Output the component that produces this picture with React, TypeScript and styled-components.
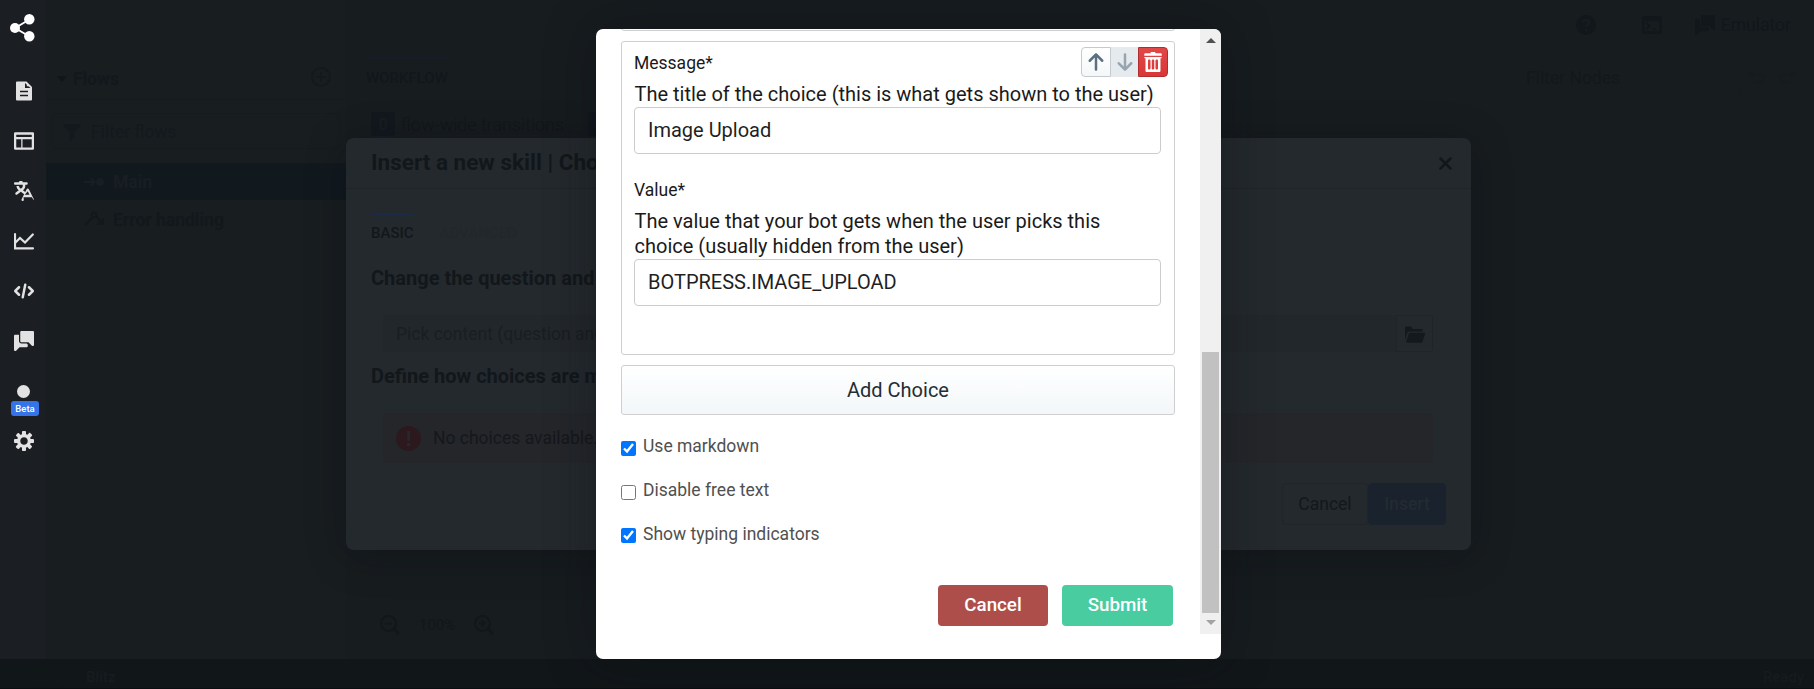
import React from "react";
import styled, { createGlobalStyle, css } from "styled-components";

const GlobalStyle = createGlobalStyle`
  * { box-sizing: border-box; }
  html, body { margin: 0; padding: 0; overflow: hidden; background: #181d20; }
  body { font-family: Roboto, "Liberation Sans", sans-serif; font-size: 17.5px; }
  button, input { font-family: inherit; }
`;

/* ---------- icons ---------- */

const paths = {
  code: "M15.71 7.29l-3-3a1.003 1.003 0 00-1.42 1.42L13.59 8l-2.29 2.29a1.003 1.003 0 001.42 1.42l3-3c.18-.18.29-.43.29-.71 0-.28-.12-.53-.3-.71zM5 5a1.003 1.003 0 00-1.71-.71l-3 3C.11 7.47 0 7.72 0 8c0 .28.11.53.29.71l3 3a1.003 1.003 0 001.42-1.42L2.41 8 4.7 5.71c.19-.18.3-.43.3-.71zm4-3c-.48 0-.87.35-.96.81l-.01-.01-2 10 .01.01c-.02.06-.04.12-.04.19 0 .55.45 1 1 1 .48 0 .87-.35.96-.81l.01.01 2-10-.01-.01c.02-.06.04-.12.04-.19 0-.55-.45-1-1-1z",
  chat: "M6 10c-1.1 0-2-.9-2-2V3H1c-.55 0-1 .45-1 1v11a1.003 1.003 0 001.71.71L4.41 13H10c.55 0 1-.45 1-1v-1.17l-.83-.83H6zm9-10H6c-.55 0-1 .45-1 1v7c0 .55.45 1 1 1h5.59l2.71 2.71c.17.18.42.29.7.29.55 0 1-.45 1-1V1c0-.55-.45-1-1-1z",
  cog: "M15.19 6.39h-1.85c-.11-.37-.27-.71-.45-1.04l1.36-1.36c.31-.31.31-.82 0-1.13l-1.13-1.13c-.31-.31-.82-.31-1.13 0l-1.36 1.36c-.33-.17-.67-.33-1.04-.44V.79c0-.44-.36-.8-.8-.8h-1.6c-.44 0-.8.36-.8.8v1.86c-.39.12-.75.28-1.1.47l-1.3-1.3c-.3-.3-.79-.3-1.09 0L1.82 2.91c-.3.3-.3.79 0 1.09l1.3 1.3c-.2.34-.36.7-.48 1.09H.79c-.44 0-.8.36-.8.8v1.6c0 .44.36.8.8.8h1.85c.11.37.27.71.45 1.04l-1.36 1.36c-.31.31-.31.82 0 1.13l1.13 1.13c.31.31.82.31 1.13 0l1.36-1.36c.33.18.67.33 1.04.44v1.86c0 .44.36.8.8.8h1.6c.44 0 .8-.36.8-.8v-1.86c.39-.12.75-.28 1.1-.47l1.3 1.3c.3.3.79.3 1.09 0l1.09-1.09c.3-.3.3-.79 0-1.09l-1.3-1.3c.19-.35.36-.71.48-1.1h1.85c.44 0 .8-.36.8-.8v-1.6a.816.816 0 00-.81-.79zM8 11c-1.66 0-3-1.34-3-3s1.34-3 3-3 3 1.34 3 3-1.34 3-3 3z",
  translate: "M15.89 14.56l-3.99-8h-.01c-.17-.33-.5-.56-.89-.56s-.72.23-.89.56h-.01L9 8.76 7.17 7.38l.23-.18C8.37 6.47 9 5.31 9 4V3h1c.55 0 1-.45 1-1s-.45-1-1-1H7c0-.55-.45-1-1-1H5c-.55 0-1 .45-1 1H1c-.55 0-1 .45-1 1s.45 1 1 1h6v1c0 .66-.32 1.25-.82 1.61l-.68.51-.68-.5C4.32 5.25 4 4.66 4 4H2c0 1.31.63 2.47 1.6 3.2l.23.17L1.4 9.2l.01.01C1.17 9.4 1 9.67 1 10c0 .55.45 1 1 1 .23 0 .42-.09.59-.21l.01.01 2.9-2.17 2.6 1.95-1.99 3.98h.01c-.07.13-.12.28-.12.44 0 .55.45 1 1 1 .39 0 .72-.23.89-.56h.01L7.62 13h6.76l.72 1.45h.01c.17.32.5.55.89.55.55 0 1-.45 1-1 0-.16-.05-.31-.11-.44zM8.62 11L11 8.24 12.38 11H8.62z",
  layout: "M1 1h14a1 1 0 011 1v12a1 1 0 01-1 1H1a1 1 0 01-1-1V2a1 1 0 011-1zm.8 5.6v6.6h4V6.6zm5 0v6.6h7.4V6.6zM1.8 2.9v1.8h12.4V2.9z",
  filter: "M1 1h14c.9 0 1.2.9.7 1.5L10 8.5V13l-3.2 2.8c-.4.3-.8 0-.8-.5V8.5L.3 2.5C-.2 1.9.1 1 1 1z",
  trash: "M14.49 4h-13c-.28 0-.5.22-.5.5s.22.5.5.5h.5v10c0 .55.45 1 1 1h10c.55 0 1-.45 1-1V5h.5c.28 0 .5-.22.5-.5s-.22-.5-.5-.5zM6 13c0 .55-.45 1-1 1s-1-.45-1-1V7c0-.55.45-1 1-1s1 .45 1 1v6zm3 0c0 .55-.45 1-1 1s-1-.45-1-1V7c0-.55.45-1 1-1s1 .45 1 1v6zm3 0c0 .55-.45 1-1 1s-1-.45-1-1V7c0-.55.45-1 1-1s1 .45 1 1v6zm2-12h-4c0-.55-.45-1-1-1H7c-.55 0-1 .45-1 1H2c-.55 0-1 .45-1 1v1h14V2c0-.55-.45-1-1-1z",
  folder: "M2.06 6.69c.14-.4.5-.69.94-.69h11V5c0-.55-.45-1-1-1H6.41l-1.7-1.71A.997.997 0 004 2H1c-.55 0-1 .45-1 1v9.84l2.05-6.15h.01zM16 8c0-.55-.45-1-1-1H4a.99.99 0 00-.94.69l-2 6c-.04.09-.06.2-.06.31 0 .55.45 1 1 1h11c.44 0 .81-.29.94-.69l2-6c.04-.09.06-.2.06-.31z",
  up: "M13.71 6.29l-5-5C8.53 1.11 8.28 1 8 1s-.53.11-.71.29l-5 5a1.003 1.003 0 001.42 1.42L7 4.41V14c0 .55.45 1 1 1s1-.45 1-1V4.41l3.29 3.29c.18.19.43.3.71.3a1.003 1.003 0 00.71-1.71z",
  down: "M13 8c-.28 0-.53.11-.71.29L9 11.59V2c0-.55-.45-1-1-1s-1 .45-1 1v9.59L3.71 8.3A.965.965 0 003 8a1.003 1.003 0 00-.71 1.71l5 5c.18.18.43.29.71.29s.53-.11.71-.29l5-5A1.003 1.003 0 0013 8z",
  console: "M15 1H1c-.55 0-1 .45-1 1v12c0 .55.45 1 1 1h14c.55 0 1-.45 1-1V2c0-.55-.45-1-1-1zm-1 12H2V5h12v8zM4 6L3 7l2 2-2 2 1 1 3-3zM8 11h4v1H8z",
};

const Svg = styled.svg`
  display: block;
  flex: none;
`;

function Icon({ name, size = 20 }: { name: keyof typeof paths; size?: number }) {
  return (
    <Svg width={size} height={size} viewBox="0 0 16 16" fill="currentColor" fillRule="evenodd">
      <path d={paths[name]} />
    </Svg>
  );
}

const DocumentIcon = () => (
  <Svg width="20" height="20" viewBox="0 0 20 20">
    <path d="M3 .5h9.500L18 6v12.500a1 1 0 0 1-1 1H3a1 1 0 0 1-1-1V1.500a1 1 0 0 1 1-1z" fill="#e2e2e2" />
    <path d="M11 2v5h5.500z" fill="#1b1e22" />
    <path d="M12.800 1.500v3.800h4z" fill="#e2e2e2" />
    <path d="M6 10.500h8M6 14.500h8" stroke="#1b1e22" strokeWidth="1.300" />
  </Svg>
);

const ChartIcon = () => (
  <Svg width="20" height="20" viewBox="0 0 20 20" fill="none" stroke="currentColor" strokeWidth="2.200" strokeLinecap="round">
    <path d="M1 3v14.300h18M1.500 11.500L6 7l5 4.500L18.800 3.500" />
  </Svg>
);

const LogoIcon = () => (
  <Svg width="25" height="28" viewBox="0 0 25 28" fill="#fff">
    <path d="M5 14L19.500 5.500M5 14L19.500 22.500" stroke="#fff" strokeWidth="2" />
    <circle cx="5" cy="14" r="5" />
    <circle cx="19.300" cy="5.300" r="5.200" />
    <circle cx="19.300" cy="22.300" r="5.200" />
  </Svg>
);

const HelpIcon = () => (
  <Svg width="20" height="20" viewBox="0 0 20 20">
    <circle cx="10" cy="10" r="10" fill="currentColor" />
    <path d="M7 7.500c.3-3.200 6-3.200 6 0 0 2-2.800 2.300-2.800 4.300" stroke="#181d20" strokeWidth="2" fill="none" />
    <circle cx="10.200" cy="14.700" r="1.300" fill="#181d20" />
  </Svg>
);

const PlusCircleIcon = () => (
  <Svg width="20" height="20" viewBox="0 0 20 20" fill="none" stroke="currentColor" strokeWidth="2">
    <circle cx="10" cy="10" r="9" />
    <path d="M10 5v10M5 10h10" />
  </Svg>
);

const MainFlowIcon = () => (
  <Svg width="20" height="20" viewBox="0 0 20 20" fill="none" stroke="currentColor" strokeWidth="2">
    <path d="M0 10h10M6.500 6l4 4-4 4" />
    <circle cx="16" cy="10" r="4" fill="currentColor" stroke="none" />
  </Svg>
);

const ErrorFlowIcon = () => (
  <Svg width="20" height="20" viewBox="0 0 20 20" fill="none" stroke="currentColor" strokeWidth="2">
    <path d="M1 15l7-7M12 6l6 7M19 8v6h-6" />
    <circle cx="10" cy="5" r="2.500" />
  </Svg>
);

const ZoomIcon = ({ plus }: { plus?: boolean }) => (
  <Svg width="20" height="20" viewBox="0 0 20 20" fill="none" stroke="currentColor" strokeWidth="2">
    <circle cx="8.500" cy="8.500" r="7.500" />
    <path d={plus ? "M5 8.500h7M8.500 5v7" : "M5 8.500h7"} />
    <path d="M14 14l5 5" strokeWidth="3" />
  </Svg>
);

const UndoIcon = ({ flip }: { flip?: boolean }) => (
  <Svg width="17" height="17" viewBox="0 0 16 16" fill="none" stroke="currentColor" strokeWidth="2">
    <path d={flip ? "M11 2l3 3-3 3M14 5H5a4 4 0 0 0 0 8h5" : "M5 2L2 5l3 3M2 5h9a4 4 0 0 1 0 8H6"} />
  </Svg>
);

const ErrorIcon = () => (
  <Svg width="25" height="25" viewBox="0 0 25 25">
    <circle cx="12.500" cy="12.500" r="12.500" fill="#2b191e" />
    <path d="M11 5h3.200l-.5 10h-2.200zM11.100 17h3v3h-3z" fill="#27282c" />
  </Svg>
);

/* ---------- application shell ---------- */

const Shell = styled.div`
  display: grid;
  grid-template: 659px 30px / 46px 300px 1fr;
  width: 1814px;
  height: 689px;
  color: #11171b;
  background: #181d20;
`;

const NavRail = styled.nav`
  display: flex;
  flex-direction: column;
  align-items: center;
  padding: 14px 0 0 2px;
  background: #1b1e22;
  color: #e2e2e2;
`;

const Logo = styled.div`
  margin: 0 3px 24px 0;
  height: 28px;
`;

const NavItem = styled.div`
  display: flex;
  align-items: center;
  justify-content: center;
  width: 44px;
  height: 50px;
  position: relative;
`;

const Dot = styled.span`
  width: 13px;
  height: 13px;
  margin-right: 1px;
  border-radius: 50%;
  background: #e2e2e2;
`;

const Beta = styled.span`
  position: absolute;
  top: 35px;
  left: 9px;
  width: 28px;
  height: 15px;
  border-radius: 3px;
  background: #3474e8;
  color: #fff;
  font-size: 9.500px;
  font-weight: 500;
  line-height: 15px;
  text-align: center;
`;

const FlowPanel = styled.aside`
  display: flex;
  flex-direction: column;
  padding-top: 58px;
  background: #181d20;
`;

const PanelHeader = styled.div`
  display: flex;
  align-items: center;
  gap: 6px;
  height: 42px;
  padding: 0 15px 0 11px;
  border-bottom: 1px solid #171b1f;
  font-weight: 700;
  color: #13181c;

  & > :last-child { margin: -3px 0 0 auto; color: #14191d; }
`;

const Caret = styled.span`
  border: 5px solid transparent;
  border-top: 6px solid #11161a;
  border-bottom: 0;
`;

const FilterBox = styled.div`
  display: flex;
  align-items: center;
  gap: 10px;
  height: 36px;
  margin: 13px 6px 14px;
  padding: 1px 0 0 10px;
  border: 1px solid #161b1f;
  border-radius: 4px;
  color: #14191d;
`;

const FlowRow = styled.div<{ $active?: boolean }>`
  display: flex;
  align-items: center;
  gap: 9px;
  height: 37px;
  padding: ${(p) => (p.$active ? 1 : 3)}px 0 0 38px;
  font-weight: 700;
  color: ${(p) => (p.$active ? "#181e23" : "#12181b")};
  background: ${(p) => (p.$active ? "#11191f" : "transparent")};
`;

const Workspace = styled.main`
  display: flex;
  flex-direction: column;
  min-width: 0;
  background: #171c1f;
`;

const TopBar = styled.header`
  display: flex;
  justify-content: flex-end;
  align-items: center;
  gap: 6px;
  height: 50px;
  padding: 0 23px 0 0;
`;

const TopIcon = styled.span<{ $gap: number }>`
  margin-right: ${(p) => p.$gap}px;
`;

const TabsBar = styled.div`
  display: flex;
  justify-content: space-between;
  height: 50px;
  padding: 7px 18px 0 20px;
`;

const Tab = styled.span<{ $active?: boolean; $line?: string; $inset?: number }>`
  display: block;
  height: 30px;
  padding-top: ${(p) => p.$inset ?? 9}px;
  border-top: 2px solid ${(p) => p.$line ?? "transparent"};
  font-size: 15px;
  line-height: 20px;
  font-weight: 500;
  color: ${(p) => (p.$active ? "#12171b" : "#22272b")};
`;

const NodeTools = styled.div`
  display: flex;
  align-items: center;
  gap: 14px;
  height: 35px;
  margin-top: 3px;
  color: #161b1e;
`;

const NodeFilter = styled.div`
  width: 229px;
  height: 35px;
  margin-right: -8px;
  padding-left: 12px;
  line-height: 34px;
  border: 1px solid #161b1e;
  border-radius: 4px;
  color: #13181b;
`;

const Transitions = styled.div`
  display: flex;
  align-items: center;
  gap: 6px;
  height: 26px;
  margin: 11px 0 0 25px;
  color: #12171a;
  font-weight: 300;
  font-size: 18px;
`;

const CountBadge = styled.span`
  width: 24px;
  height: 24px;
  border-radius: 3px;
  background: #12181e;
  color: #181d22;
  font-weight: 700;
  font-size: 16px;
  line-height: 25px;
  text-align: center;

  &:not(:first-child) { margin-left: 18px; }
`;

const ZoomBar = styled.div`
  display: flex;
  align-items: center;
  gap: 19px;
  height: 45px;
  margin: auto 0 12px 16px;
  padding: 0 18px;
  border-radius: 4px;
  font-size: 15px;
  color: #12171a;
`;

const StatusBar = styled.footer`
  grid-column: 1 / -1;
  display: flex;
  align-items: center;
  padding: 6px 10px 0 12px;
  border-bottom: 1px solid #0a0e10;
  background: #111619;
  color: #171c1f;
  font-size: 15px;
`;

const Version = styled.span`
  width: 74px;
  color: #13181b;
`;

const BotName = styled.span`
  flex: 1;
  font-weight: 500;
`;

/* ---------- skill dialog ---------- */

const SkillDialog = styled.section`
  position: absolute;
  left: 346px;
  top: 138px;
  display: flex;
  flex-direction: column;
  width: 1125px;
  height: 412px;
  border-radius: 8px;
  background: #24292d;
  color: #12171b;
  box-shadow: 0 6px 40px rgba(8, 12, 14, 0.28);
  overflow: hidden;
`;

const DialogHeader = styled.div`
  display: flex;
  align-items: center;
  justify-content: space-between;
  height: 51px;
  padding: 0 19px 2px 25px;
  border-bottom: 1px solid #1f2428;
  font-size: 22.500px;
  font-weight: 700;

  & > svg { margin-top: 2px; }
`;

const DialogTabs = styled.div`
  display: flex;
  gap: 26px;
  padding: 24px 25px 0;
`;

const SectionTitle = styled.h3<{ $top: number }>`
  margin: ${(p) => p.$top}px 25px 0;
  font-size: 20px;
  line-height: 26px;
  font-weight: 700;
`;

const PickRow = styled.div`
  display: flex;
  height: 37px;
  margin: 24px 38px 0 37px;
`;

const PickField = styled.div`
  flex: 1;
  padding-left: 13px;
  line-height: 38px;
  background: #22272b;
  color: #191e22;
  border-radius: 3px 0 0 3px;
`;

const PickButton = styled.div`
  display: grid;
  place-items: center;
  width: 37px;
  border: 1px solid #1f2428;
  border-radius: 0 3px 3px 0;
  color: #14191d;
`;

const Callout = styled.div`
  display: flex;
  align-items: center;
  gap: 12px;
  height: 50px;
  margin: 24px 38px 0 37px;
  padding-left: 13px;
  border-radius: 4px;
  background: #24262a;
  color: #14181c;
`;

const DialogFooter = styled.div`
  display: flex;
  justify-content: flex-end;
  margin: 20px 25px 0;
`;

const DimButton = styled.div<{ $primary?: boolean }>`
  width: ${(p) => (p.$primary ? 78 : 86)}px;
  height: 42px;
  border: 1px solid ${(p) => (p.$primary ? "#1a222e" : "#202529")};
  border-radius: 4px;
  background: ${(p) => (p.$primary ? "#1a222d" : "transparent")};
  color: ${(p) => (p.$primary ? "#232a32" : "#13181b")};
  font-weight: ${(p) => (p.$primary ? 500 : 400)};
  line-height: 40px;
  text-align: center;
`;

/* ---------- choice form modal ---------- */

const Modal = styled.section`
  position: absolute;
  left: 596px;
  top: 29px;
  width: 625px;
  height: 630px;
  border-radius: 7px;
  background: #fff;
  color: #1a1a1a;
  overflow: hidden;
`;

const ModalShadow = styled(Modal)`
  background: transparent;
  box-shadow: 0 0 50px rgba(10, 14, 18, 0.4);
`;

const ScrollArea = styled.div`
  display: flex;
  height: 605px;
`;

const Form = styled.form`
  flex: 1;
  display: flex;
  flex-direction: column;
  padding: 0 25px;
`;

const framed = css`
  border: 1px solid #cfcfcf;
  border-radius: 3px;
`;

const PreviousItem = styled.div`
  ${framed};
  flex: none;
  height: 8px;
  margin-top: -6px;
  margin-bottom: 10px;
`;

const ChoiceItem = styled.div`
  ${framed};
  position: relative;
  flex: none;
  height: 314px;
  padding: 10px 13px 0 12px;
`;

const Label = styled.label`
  display: block;
  height: 30px;
  line-height: 22px;
  font-size: 17.500px;
`;

const Hint = styled.p`
  margin: 0;
  padding-left: 0.500px;
  font-size: 20px;
  line-height: 25px;
`;

const TextInput = styled.input`
  display: block;
  width: 527px;
  height: 47px;
  margin: 0 0 25px;
  padding: 0 13px 2px;
  border: 1px solid #ccc;
  border-radius: 4px;
  background: #fff;
  color: #1f1f1f;
  font-size: 20px;
`;

const ItemTools = styled.div`
  position: absolute;
  top: 5px;
  right: 6px;
  display: flex;
`;

const ToolButton = styled.button<{ $kind: "up" | "down" | "delete" }>`
  display: grid;
  place-items: center;
  height: 30px;
  padding: 0;
  ${(p) =>
    p.$kind === "up" &&
    css`
      width: 30px;
      border: 1px solid #c5cacd;
      border-radius: 4px 0 0 4px;
      background: linear-gradient(#fff, #f4f7f9);
      color: #5c7080;
    `}
  ${(p) =>
    p.$kind === "down" &&
    css`
      width: 27px;
      border: 0;
      background: #e5eaee;
      color: #98a4ae;
    `}
  ${(p) =>
    p.$kind === "delete" &&
    css`
      width: 30px;
      border: 1px solid #b02c2e;
      border-radius: 0 4px 4px 0;
      background: linear-gradient(#e04848, #d93636);
      color: #fff;
    `}
`;

const AddChoice = styled.button`
  ${framed};
  flex: none;
  height: 50px;
  margin: 10px 0 18px;
  padding: 0;
  background: linear-gradient(#fff, #f3f7f9);
  color: #252d33;
  font-size: 20px;
`;

const CheckRow = styled.label`
  display: flex;
  flex: none;
  align-items: flex-start;
  gap: 7px;
  height: 44px;
  padding-top: 2px;
  color: #505050;
  font-size: 17.500px;
  line-height: 22px;
`;

const Check = styled.input`
  width: 15px;
  height: 15px;
  margin: 6px 0 0;

  ${CheckRow}:nth-of-type(3) & { margin-top: 5px; }
`;

const Actions = styled.div`
  display: flex;
  justify-content: flex-end;
  gap: 14px;
  margin-top: 20px;
  padding-right: 2px;
`;

const ActionButton = styled.button<{ $color: string; $w: number }>`
  width: ${(p) => p.$w}px;
  height: 41px;
  padding: 0 0 2px;
  border: 0;
  border-radius: 4px;
  background: ${(p) => p.$color};
  color: #fff;
  font-size: 18.750px;
  font-weight: 500;
`;

const Scrollbar = styled.div`
  display: flex;
  flex-direction: column;
  align-items: center;
  justify-content: space-between;
  width: 21px;
  background: #f0f0f0;
`;

const Arrow = styled.span<{ $down?: boolean }>`
  border: 5px solid transparent;
  ${(p) =>
    p.$down
      ? css`
          border-top: 5px solid #a3a3a3;
          border-bottom: 0;
          margin: 7px 0 9px;
        `
      : css`
          border-bottom: 5px solid #505050;
          border-top: 0;
          margin-top: 9px;
        `}
`;

const Thumb = styled.div`
  width: 17px;
  height: 261px;
  margin-top: auto;
  background: #c1c1c1;
`;

function Background() {
  return (
    <Shell>
      <NavRail>
        <Logo><LogoIcon /></Logo>
        <NavItem><DocumentIcon /></NavItem>
        <NavItem><Icon name="layout" /></NavItem>
        <NavItem><Icon name="translate" /></NavItem>
        <NavItem><ChartIcon /></NavItem>
        <NavItem><Icon name="code" /></NavItem>
        <NavItem><Icon name="chat" /></NavItem>
        <NavItem><Dot /><Beta>Beta</Beta></NavItem>
        <NavItem><Icon name="cog" /></NavItem>
      </NavRail>
      <FlowPanel>
        <PanelHeader><Caret />Flows<PlusCircleIcon /></PanelHeader>
        <FilterBox><Icon name="filter" size={18} />Filter flows</FilterBox>
        <FlowRow $active><MainFlowIcon />Main</FlowRow>
        <FlowRow><ErrorFlowIcon />Error handling</FlowRow>
      </FlowPanel>
      <Workspace>
        <TopBar>
          <TopIcon $gap={40}><HelpIcon /></TopIcon>
          <TopIcon $gap={27}><Icon name="console" /></TopIcon>
          <Icon name="chat" />
          Emulator
        </TopBar>
        <TabsBar>
          <Tab $active $line="#151d2a">WORKFLOW</Tab>
          <NodeTools>
            <NodeFilter>Filter Nodes</NodeFilter>
            <UndoIcon />
            <UndoIcon flip />
          </NodeTools>
        </TabsBar>
        <Transitions>
          <CountBadge>0</CountBadge>
          flow-wide transitions
          <CountBadge />
        </Transitions>
        <ZoomBar><ZoomIcon /><span>100%</span><ZoomIcon plus /></ZoomBar>
      </Workspace>
      <StatusBar>
        <Version>12.22.2</Version>
        <BotName>Blitz</BotName>
        Ready
      </StatusBar>
    </Shell>
  );
}

function InsertSkill() {
  return (
    <SkillDialog>
      <DialogHeader>
        Insert a new skill | Choice
        <Svg width="13" height="13" viewBox="0 0 13 13" stroke="currentColor" strokeWidth="2.500" strokeLinecap="round">
          <path d="M1.500 1.500l10 10M11.500 1.500l-10 10" />
        </Svg>
      </DialogHeader>
      <DialogTabs>
        <Tab $active $line="#1b2b47" $inset={8}>BASIC</Tab>
        <Tab $inset={8}>ADVANCED</Tab>
      </DialogTabs>
      <SectionTitle $top={22}>Change the question and choices</SectionTitle>
      <PickRow>
        <PickField>Pick content (question and choices)</PickField>
        <PickButton><Icon name="folder" /></PickButton>
      </PickRow>
      <SectionTitle $top={11}>Define how choices are matched</SectionTitle>
      <Callout><ErrorIcon />No choices available.</Callout>
      <DialogFooter>
        <DimButton>Cancel</DimButton>
        <DimButton $primary>Insert</DimButton>
      </DialogFooter>
    </SkillDialog>
  );
}

function ChoiceForm() {
  return (
    <Modal>
      <ScrollArea>
        <Form>
          <PreviousItem />
          <ChoiceItem>
            <ItemTools>
              <ToolButton type="button" $kind="up"><Icon name="up" /></ToolButton>
              <ToolButton type="button" $kind="down"><Icon name="down" /></ToolButton>
              <ToolButton type="button" $kind="delete"><Icon name="trash" /></ToolButton>
            </ItemTools>
            <Label>Message*</Label>
            <Hint>The title of the choice (this is what gets shown to the user)</Hint>
            <TextInput defaultValue="Image Upload" />
            <Label>Value*</Label>
            <Hint>The value that your bot gets when the user picks this choice (usually hidden from the user)</Hint>
            <TextInput defaultValue="BOTPRESS.IMAGE_UPLOAD" />
          </ChoiceItem>
          <AddChoice type="button">Add Choice</AddChoice>
          <CheckRow><Check type="checkbox" defaultChecked />Use markdown</CheckRow>
          <CheckRow><Check type="checkbox" />Disable free text</CheckRow>
          <CheckRow><Check type="checkbox" defaultChecked />Show typing indicators</CheckRow>
          <Actions>
            <ActionButton type="button" $color="#ad4e4b" $w={110}>Cancel</ActionButton>
            <ActionButton type="button" $color="#48cca0" $w={111}>Submit</ActionButton>
          </Actions>
        </Form>
        <Scrollbar>
          <Arrow />
          <Thumb />
          <Arrow $down />
        </Scrollbar>
      </ScrollArea>
    </Modal>
  );
}

export default function App() {
  return (
    <>
      <GlobalStyle />
      <Background />
      <InsertSkill />
      <ModalShadow />
      <ChoiceForm />
    </>
  );
}
